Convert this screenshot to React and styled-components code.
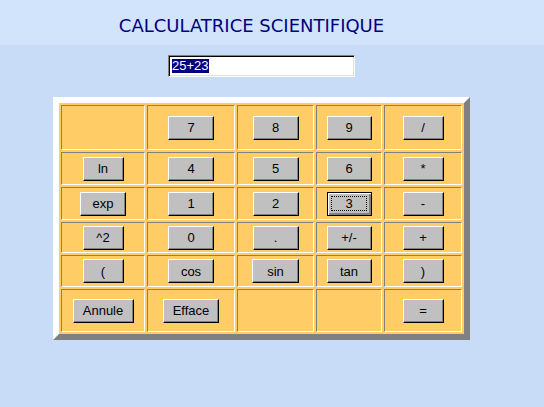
import React from "react";
import styled, { createGlobalStyle } from "styled-components";

const GlobalStyle = createGlobalStyle`
  html, body {
    margin: 0;
    padding: 0;
    background: #c8dcf8;
    font-family: "Liberation Sans", Arial, sans-serif;
  }
`;

const rows = [
  [null, "7", "8", "9", "/"],
  ["ln", "4", "5", "6", "*"],
  ["exp", "1", "2", "3", "-"],
  ["^2", "0", ".", "+/-", "+"],
  ["(", "cos", "sin", "tan", ")"],
  ["Annule", "Efface", null, null, "="],
];

const colWidths = [41, 46, 46, 45, 41];
const specialWidths = { exp: 46, Annule: 61, Efface: 56, sin: 47 };

export default function App() {
  return (
    <>
      <GlobalStyle />
      <Header>
        <Page>
          <Title>CALCULATRICE SCIENTIFIQUE</Title>
        </Page>
      </Header>
      <Page>
        <Display>
          <Selected>25+23</Selected>
        </Display>
        <Keypad>
          {rows.map((row, r) =>
            row.map((key, c) => (
              <Cell key={r + "-" + c}>
                {key && (
                  <Key
                    $width={specialWidths[key] || colWidths[c]}
                    $focused={key === "3"}
                  >
                    {key}
                  </Key>
                )}
              </Cell>
            ))
          )}
        </Keypad>
      </Page>
    </>
  );
}

const Header = styled.div`
  height: 45px;
  background: #d2e4fc;
`;

const Page = styled.div`
  width: 523px;
  display: flex;
  flex-direction: column;
  align-items: center;
`;

const Title = styled.h1`
  margin: 0;
  padding: 15px 20px 0 0;
  font-family: "DejaVu Sans", Verdana, sans-serif;
  font-weight: normal;
  font-size: 18px;
  line-height: 21px;
  color: #000080;
`;

const Display = styled.div`
  margin-top: 10px;
  width: 187px;
  height: 22px;
  box-sizing: border-box;
  background: #fff;
  border: 1px solid;
  border-color: #808080 #fff #fff #808080;
  box-shadow: inset 1px 1px #000, inset -1px -1px #dfdfdf;
  padding: 3px 0 0 3px;
  display: flex;
  align-items: flex-start;
`;

const Selected = styled.span`
  background: #000080;
  color: #fff;
  font-size: 13px;
  line-height: 14px;
`;

const Keypad = styled.div`
  margin-top: 20px;
  display: grid;
  grid-template-columns: 84px 88px 77px 66px 78px;
  grid-template-rows: 45px 33px 33px 31px 32px 43px;
  gap: 2px;
  padding: 2px;
  background: #ffcc66;
  border: 6px solid;
  border-color: #fff #808080 #808080 #fff;
`;

const Cell = styled.div`
  box-sizing: border-box;
  border: 1px solid;
  border-color: #808080 #fff #fff #808080;
  display: flex;
  align-items: center;
  justify-content: center;
`;

const Key = styled.button`
  position: relative;
  box-sizing: border-box;
  width: ${(p) => p.$width}px;
  height: 24px;
  padding: 0;
  margin: 0;
  background: #c0c0c0;
  font-family: "Liberation Sans", Arial, sans-serif;
  font-size: 13px;
  color: #000;
  border: 1px solid;
  border-color: ${(p) => (p.$focused ? "#000" : "#fff #000 #000 #fff")};
  box-shadow: ${(p) =>
    p.$focused
      ? "inset 1px 1px #fff, inset -2px -2px #808080, inset -1px -1px #000"
      : "inset -1px -1px #808080"};
  &::after {
    content: "";
    display: ${(p) => (p.$focused ? "block" : "none")};
    position: absolute;
    left: 3px;
    top: 3px;
    right: 4px;
    bottom: 4px;
    border: 1px dotted #000;
  }
`;
